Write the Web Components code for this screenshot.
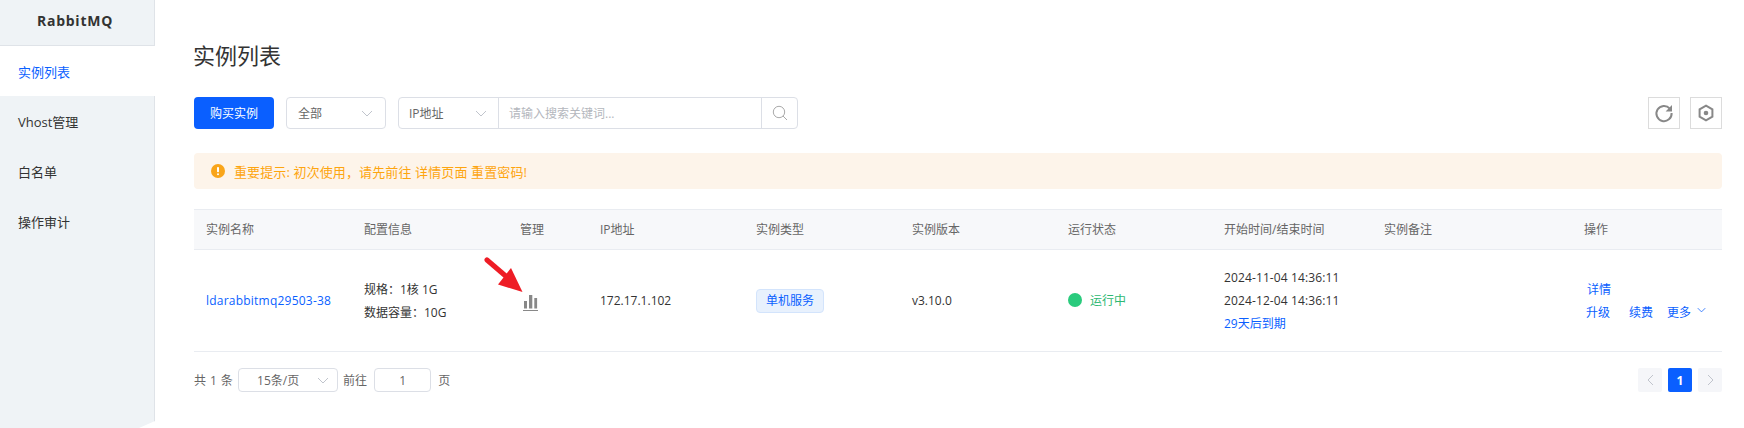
<!DOCTYPE html>
<html lang="zh">
<head>
<meta charset="utf-8">
<title>RabbitMQ</title>
<style>
  html, body { margin: 0; height: 100%; background: #fff; }
  body { font: 12px "Open Sans", "Noto Sans CJK SC", sans-serif; color: #333; overflow: hidden; }
</style>
</head>
<body>
<app-shell>
  <side-nav slot="nav" title-text="RabbitMQ">
    <side-item active>实例列表</side-item>
    <side-item>Vhost管理</side-item>
    <side-item>白名单</side-item>
    <side-item>操作审计</side-item>
  </side-nav>
  <instance-page></instance-page>
</app-shell>

<script>
const FONT = '"Open Sans", "Noto Sans CJK SC", sans-serif'
const CHEVRON = `<svg width="12" height="7" viewBox="0 0 12 7" fill="none" stroke="currentColor" stroke-width="1"><path d="M1 1l5 5 5-5"/></svg>`

class AppShell extends HTMLElement {
  constructor() {
    super()
    this.attachShadow({ mode: 'open' }).innerHTML = `
      <style>
        :host { display: flex; width: 1744px; height: 428px; overflow: hidden; }
        ::slotted(side-nav) { flex: none; }
        .main { flex: 1; min-width: 0; }
      </style>
      <slot name="nav"></slot>
      <div class="main"><slot></slot></div>`
  }
}
customElements.define('app-shell', AppShell)

class SideNav extends HTMLElement {
  constructor() {
    super()
    this.attachShadow({ mode: 'open' }).innerHTML = `
      <style>
        :host {
          display: block; width: 155px; height: 428px; box-sizing: border-box;
          background: #eff3f6; border-right: 1px solid #dfe3e8;
          clip-path: polygon(0 0, 100% 0, 100% 421px, 139px 100%, 0 100%);
        }
        .head {
          height: 46px; box-sizing: border-box; border-bottom: 1px solid #dfe3e8; padding: 0 4px 4px 0;
          display: flex; align-items: center; justify-content: center;
          font: bold 14px "Open Sans", sans-serif; letter-spacing: .75px; color: #333;
        }
      </style>
      <div class="head"></div>
      <slot></slot>`
    this.shadowRoot.querySelector('.head').textContent = this.getAttribute('title-text')
  }
}
customElements.define('side-nav', SideNav)

class SideItem extends HTMLElement {
  constructor() {
    super()
    this.attachShadow({ mode: 'open' }).innerHTML = `
      <style>
        :host {
          display: flex; align-items: center; height: 50px; padding-left: 18px;
          font: 13px ${FONT}; color: #333;
        }
        :host([active]) { background: #fff; color: #0a5fff; margin-right: -1px; }
      </style>
      <slot></slot>`
  }
}
customElements.define('side-item', SideItem)

class SelectBox extends HTMLElement {
  constructor() {
    super()
    this.attachShadow({ mode: 'open' }).innerHTML = `
      <style>
        :host {
          display: flex; align-items: center; justify-content: space-between; box-sizing: border-box;
          width: 100px; height: 32px; padding: 0 12px 0 11px; background: #fff;
          border: 1px solid #dcdfe6; border-radius: 4px; font: 12px ${FONT}; color: #666;
        }
        svg { color: #c0c4cc; }
      </style>
      <slot></slot>${CHEVRON}`
  }
}
customElements.define('select-box', SelectBox)

class SearchBox extends HTMLElement {
  constructor() {
    super()
    this.attachShadow({ mode: 'open' }).innerHTML = `
      <style>
        :host {
          display: flex; height: 32px; box-sizing: border-box; width: 400px;
          border: 1px solid #dcdfe6; border-radius: 4px; font: 12px ${FONT};
        }
        .type {
          flex: none; width: 100px; box-sizing: border-box; padding: 0 11px 0 10px; color: #666;
          display: flex; align-items: center; justify-content: space-between;
          border-right: 1px solid #dcdfe6;
        }
        .type svg { color: #c0c4cc; }
        .input { flex: 1; padding-left: 10px; display: flex; align-items: center; color: #b4b7bd; }
        .go {
          flex: none; width: 35px; border-left: 1px solid #dcdfe6; color: #aaa;
          display: flex; align-items: center; justify-content: center;
        }
      </style>
      <div class="type">IP地址${CHEVRON}</div>
      <div class="input">请输入搜索关键词...</div>
      <div class="go">
        <svg width="16" height="16" viewBox="0 0 16 16" fill="none" stroke="currentColor" stroke-width="1"><circle cx="7" cy="7" r="5.7"/><path d="M11 11l4 4"/></svg>
      </div>`
  }
}
customElements.define('search-box', SearchBox)

class IconButton extends HTMLElement {
  constructor() {
    super()
    this.attachShadow({ mode: 'open' }).innerHTML = `
      <style>
        :host {
          display: flex; align-items: center; justify-content: center; box-sizing: border-box;
          width: 32px; height: 32px; border: 1px solid #dcdcdc; color: #888;
        }
      </style>
      <slot></slot>`
  }
}
customElements.define('icon-button', IconButton)

class AlertBar extends HTMLElement {
  constructor() {
    super()
    this.attachShadow({ mode: 'open' }).innerHTML = `
      <style>
        :host {
          display: flex; align-items: center; gap: 9px; height: 36px; box-sizing: border-box; padding-left: 17px;
          background: #fdf4ea; border-radius: 4px; color: #fda50f; font: 13px ${FONT}; letter-spacing: .12px;
        }
        svg { flex: none; }
      </style>
      <svg width="14" height="14" viewBox="0 0 14 14"><circle cx="7" cy="7" r="7" fill="#f9a51a"/><rect x="6" y="3" width="2" height="5.2" rx=".8" fill="#fff"/><rect x="6" y="9.3" width="2" height="2" rx="1" fill="#fff"/></svg>
      <span><slot></slot></span>`
  }
}
customElements.define('alert-bar', AlertBar)

class TableRow extends HTMLElement {
  constructor() {
    super()
    this.attachShadow({ mode: 'open' }).innerHTML = `
      <style>
        :host {
          display: grid; grid-template-columns: 158px 156px 80px 156px 156px 156px 156px 160px 200px 150px;
          align-items: center; box-sizing: border-box; height: 102px;
          border-bottom: 1px solid #e9ecf1; color: #333;
        }
        :host([head]) {
          height: 41px; background: #f7f8fa; border-top: 1px solid #e9ecf1; color: #666;
        }
        ::slotted(*) { padding-left: 12px; min-width: 0; line-height: 23px; }
      </style>
      <slot></slot>`
  }
}
customElements.define('table-row', TableRow)

class TagLabel extends HTMLElement {
  constructor() {
    super()
    this.attachShadow({ mode: 'open' }).innerHTML = `
      <style>
        :host {
          display: inline-flex; align-items: center; height: 24px; box-sizing: border-box; padding: 0 9px;
          background: #e8f1fd; border: 1px solid #d3e4fc; border-radius: 4px; color: #0a5fff;
        }
      </style>
      <slot></slot>`
  }
}
customElements.define('tag-label', TagLabel)

class StatusDot extends HTMLElement {
  constructor() {
    super()
    this.attachShadow({ mode: 'open' }).innerHTML = `
      <style>
        :host { display: inline-flex; align-items: center; gap: 8px; color: #2eb872; padding-top: 2px; }
        i { width: 14px; height: 14px; border-radius: 50%; background: #2acb7d; }
      </style>
      <i></i><slot></slot>`
  }
}
customElements.define('status-dot', StatusDot)

class PagerBar extends HTMLElement {
  constructor() {
    super()
    this.attachShadow({ mode: 'open' }).innerHTML = `
      <style>
        :host { display: flex; align-items: center; height: 24px; margin-top: 16px; color: #666; font: 12px ${FONT}; }
        .size, .jump {
          display: flex; align-items: center; box-sizing: border-box; height: 24px;
          border: 1px solid #dcdfe6; border-radius: 4px;
        }
        .total { letter-spacing: .4px; }
        .size { width: 100px; margin: 0 5px 0 5px; padding: 0 8px 0 18px; justify-content: space-between; }
        .size svg { color: #c0c4cc; }
        .jump { width: 57px; margin: 0 7px 0 7px; justify-content: center; }
        .space { flex: 1; }
        .page {
          width: 24px; height: 24px; margin-left: 6px; border-radius: 2px; background: #f5f6f9; color: #c0c4cc;
          display: flex; align-items: center; justify-content: center;
        }
        .page.on { background: #0a5fff; color: #fff; font-weight: 700; }
      </style>
      <span class="total">共 1 条</span>
      <div class="size">15条/页${CHEVRON}</div>
      <span>前往</span>
      <div class="jump">1</div>
      <span>页</span>
      <div class="space"></div>
      <div class="page"><svg width="7" height="12" viewBox="0 0 7 12" fill="none" stroke="currentColor"><path d="M6 1L1 6l5 5"/></svg></div>
      <div class="page on">1</div>
      <div class="page"><svg width="7" height="12" viewBox="0 0 7 12" fill="none" stroke="currentColor"><path d="M1 1l5 5-5 5"/></svg></div>`
  }
}
customElements.define('pager-bar', PagerBar)

const pageTemplate = document.createElement('template')
pageTemplate.innerHTML = `
  <style>
    :host {
      display: block; position: relative; box-sizing: border-box; height: 428px;
      padding: 40px 22px 0 39px; font: 12px ${FONT};
    }
    h1 { margin: 0 0 0 -1px; font: 400 22px/30px ${FONT}; color: #333; }
    .tools { display: flex; align-items: center; margin-top: 27px; }
    .buy {
      width: 80px; height: 32px; margin-right: 12px; border-radius: 4px; background: #0a5fff; color: #fff;
      display: flex; align-items: center; justify-content: center;
    }
    search-box { margin-left: 12px; }
    .space { flex: 1; }
    icon-button + icon-button { margin-left: 10px; }
    alert-bar { margin: 24px 0 20px; }
    a { color: #0a5fff; text-decoration: none; }
    .name { letter-spacing: .22px; }
    .dates div { height: 23px; }
    .dates .time { letter-spacing: .12px; }
    .ops { display: grid; grid-template-rows: 23px 23px; padding-left: 14px !important; }
    .ops div { display: flex; align-items: center; }
    .ops .first { padding-left: 1px; }
    .ops .more { margin-left: 14px; }
    .ops .renew { margin-left: 19px; }
    .ops svg { margin-left: 6px; width: 9px; height: 6px; color: #0a5fff; margin-top: -4px; }
    .chart { display: block; padding-left: 15px !important; }
    .chart svg { display: block; margin-top: 4px; }
    .arrow { position: absolute; left: 329px; top: 257px; }
  </style>
  <h1>实例列表</h1>
  <div class="tools">
    <div class="buy">购买实例</div>
    <select-box>全部</select-box>
    <search-box></search-box>
    <div class="space"></div>
    <icon-button>
      <svg width="20" height="20" viewBox="0 0 20 20" fill="none"><path d="M15.8 5.6A7.6 7.6 0 1 0 17.6 10" stroke="#888" stroke-width="2"/><path d="M18 2v6.4h-6.4z" fill="#888"/></svg>
    </icon-button>
    <icon-button>
      <svg width="16" height="18" viewBox="0 0 16 18" fill="none"><path d="M8 1.6l6.4 3.7v7.4L8 16.4l-6.4-3.7V5.3z" stroke="#888" stroke-width="2"/><circle cx="8" cy="9" r="2.3" fill="#888"/></svg>
    </icon-button>
  </div>
  <alert-bar>重要提示: 初次使用，请先前往 详情页面 重置密码!</alert-bar>
  <table-row head>
    <div>实例名称</div><div>配置信息</div><div>管理</div><div>IP地址</div><div>实例类型</div>
    <div>实例版本</div><div>运行状态</div><div>开始时间/结束时间</div><div>实例备注</div><div>操作</div>
  </table-row>
  <table-row>
    <div><a class="name">ldarabbitmq29503-38</a></div>
    <div>规格：1核 1G<br>数据容量：10G</div>
    <div class="chart">
      <svg width="16" height="16" viewBox="0 0 16 16" fill="#888"><rect x="1" y="6" width="3" height="7.5"/><rect x="6" y="0" width="3.3" height="13.5"/><rect x="11.3" y="3" width="2.8" height="10.5"/><rect x="0" y="15" width="15" height="1"/></svg>
    </div>
    <div>172.17.1.102</div>
    <div><tag-label>单机服务</tag-label></div>
    <div>v3.10.0</div>
    <div><status-dot>运行中</status-dot></div>
    <div class="dates">
      <div class="time">2024-11-04 14:36:11</div>
      <div class="time">2024-12-04 14:36:11</div>
      <div><a>29天后到期</a></div>
    </div>
    <div></div>
    <div class="ops">
      <div class="first"><a>详情</a></div>
      <div><a>升级</a><a class="renew">续费</a><a class="more">更多</a>${CHEVRON}</div>
    </div>
  </table-row>
  <pager-bar></pager-bar>
  <svg class="arrow" width="44" height="40" viewBox="0 0 44 40">
    <path d="M3 3L24 21" stroke="#ee1c25" stroke-width="5" stroke-linecap="round"/>
    <path d="M38.5 35L14 27.5 27 11z" fill="#ee1c25"/>
  </svg>`

class InstancePage extends HTMLElement {
  constructor() {
    super()
    this.attachShadow({ mode: 'open' }).appendChild(pageTemplate.content.cloneNode(true))
  }
}
customElements.define('instance-page', InstancePage)
</script>
</body>
</html>
